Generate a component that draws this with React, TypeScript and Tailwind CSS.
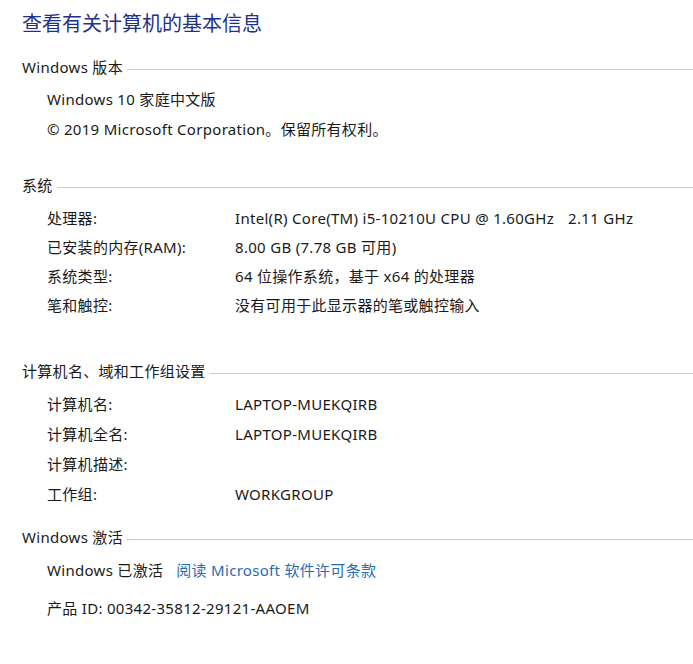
import React from "react";

const font = { fontFamily: '"Noto Sans", "Noto Sans CJK SC", sans-serif' };

function Header({ title, className }: { title: string; className: string }) {
  return (
    <div className={`flex items-center h-[22px] pl-[22px] ${className}`}>
      <span className="text-[15px] text-[#1a1a1a] whitespace-nowrap tracking-[0.3px]">{title}</span>
      <div className="flex-1 h-px bg-[#cdcdcd] ml-[4px] mt-[4px]" />
    </div>
  );
}

function Row({ label, value, h }: { label: string; value: React.ReactNode; h: string }) {
  return (
    <div className={`flex items-center pl-[47px] ${h} text-[15px] text-[#1a1a1a] tracking-[0.3px]`}>
      <span className="w-[188px] shrink-0 whitespace-nowrap">{label}</span>
      <span className="whitespace-pre">{value}</span>
    </div>
  );
}

export default function App() {
  return (
    <div className="w-[693px] h-[664px] bg-white overflow-hidden" style={font}>
      <div className="pt-[10px] pl-[22px] h-[38px] text-[20px] leading-[28px] text-[#1e3287]">
        查看有关计算机的基本信息
      </div>

      <Header title="Windows 版本" className="mt-[18px]" />
      <div className="mt-[6px] flex flex-col text-[15px] text-[#1a1a1a] tracking-[0.3px]">
        <div className="h-[30px] flex items-center pl-[47px]">Windows 10 家庭中文版</div>
        <div className="h-[30px] flex items-center pl-[47px]">© 2019 Microsoft Corporation。保留所有权利。</div>
      </div>

      <Header title="系统" className="mt-[30px]" />
      <div className="mt-[8px] flex flex-col">
        <Row
          h="h-[29px]"
          label="处理器:"
          value={
            <>
              Intel(R) Core(TM) i5-10210U CPU @ 1.60GHz<span className="ml-[14px]">2.11 GHz</span>
            </>
          }
        />
        <Row h="h-[29px]" label="已安装的内存(RAM):" value="8.00 GB (7.78 GB 可用)" />
        <Row h="h-[29px]" label="系统类型:" value="64 位操作系统，基于 x64 的处理器" />
        <Row h="h-[29px]" label="笔和触控:" value="没有可用于此显示器的笔或触控输入" />
      </div>

      <Header title="计算机名、域和工作组设置" className="mt-[40px]" />
      <div className="mt-[7px] flex flex-col">
        <Row h="h-[30px]" label="计算机名:" value="LAPTOP-MUEKQIRB" />
        <Row h="h-[30px]" label="计算机全名:" value="LAPTOP-MUEKQIRB" />
        <Row h="h-[30px]" label="计算机描述:" value="" />
        <Row h="h-[30px]" label="工作组:" value="WORKGROUP" />
      </div>

      <Header title="Windows 激活" className="mt-[17px]" />
      <div className="mt-[7px] h-[30px] flex items-center pl-[47px] text-[15px] text-[#1a1a1a] tracking-[0.3px]">
        <span>Windows 已激活</span>
        <span className="ml-[13px] text-[#2a6bb0]">阅读 Microsoft 软件许可条款</span>
      </div>
      <div className="mt-[8px] h-[30px] flex items-center pl-[47px] text-[15px] text-[#1a1a1a] tracking-[0.3px]">
        产品 ID: 00342-35812-29121-AAOEM
      </div>
    </div>
  );
}
